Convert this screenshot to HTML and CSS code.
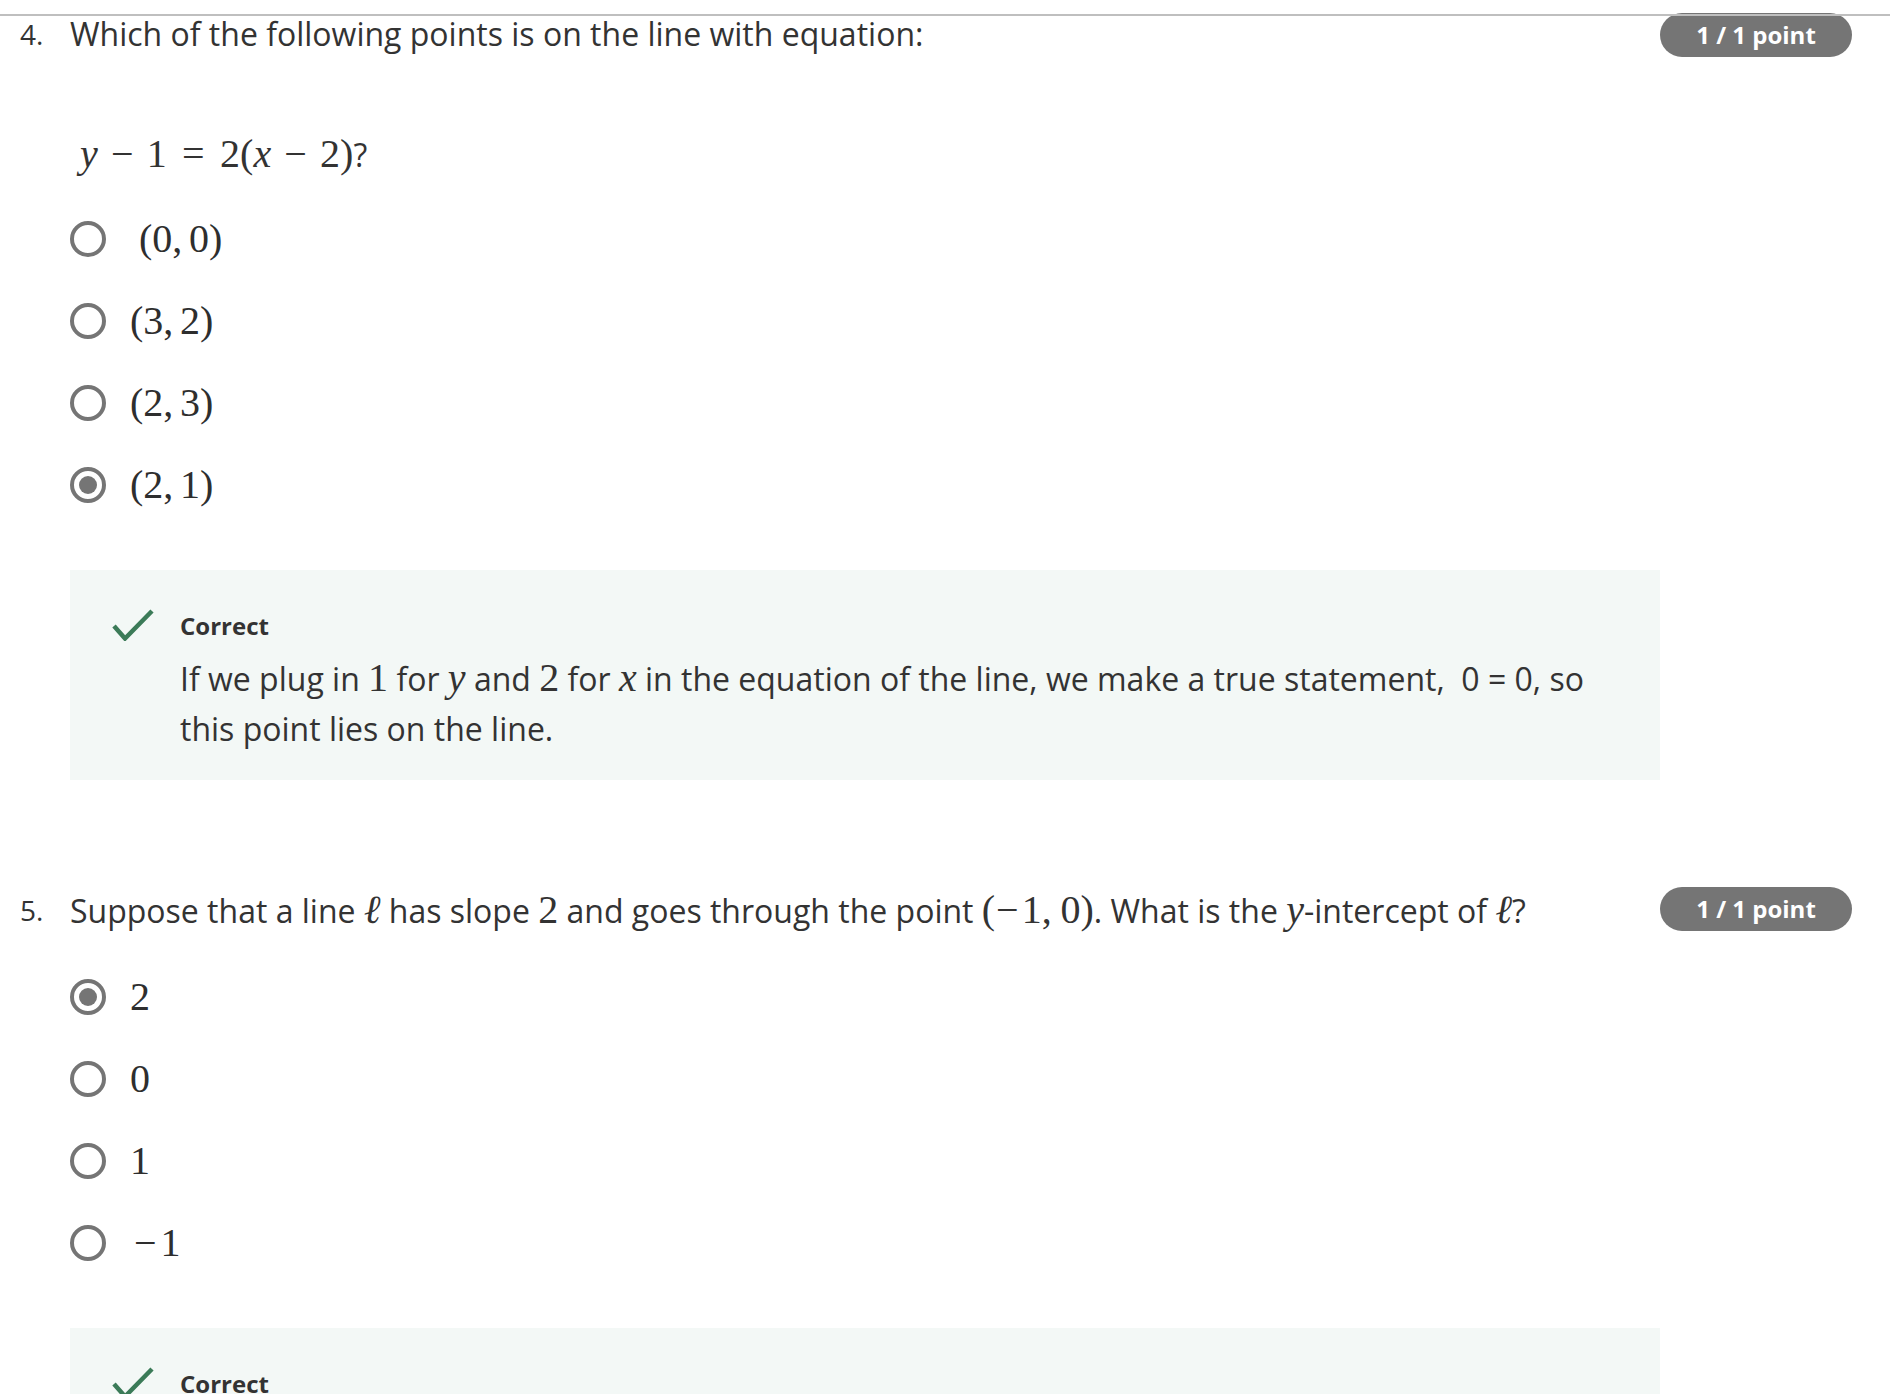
FILE: index.html
```html
<!DOCTYPE html>
<html lang="en">
<head>
<meta charset="utf-8">
<title>Quiz</title>
<link rel="stylesheet" href="styles.css">
</head>
<body>
<div class="page">
  <section class="question q4">
    <div class="qnum">4.</div>
    <div class="qbody">
      <div class="qtext">Which of the following points is on the line with equation:</div>
      <p class="eq"><span class="m"><i>y</i><span class="bin">−</span>1<span class="rel">=</span>2(<i>x</i><span class="bin">−</span>2)</span>?</p>
      <ul class="options">
        <li class="opt"><span class="radio"></span><span class="m lead">(0,<span class="ts"></span>0)</span></li>
        <li class="opt"><span class="radio"></span><span class="m">(3,<span class="ts"></span>2)</span></li>
        <li class="opt"><span class="radio"></span><span class="m">(2,<span class="ts"></span>3)</span></li>
        <li class="opt"><span class="radio checked"></span><span class="m">(2,<span class="ts"></span>1)</span></li>
      </ul>
      <div class="feedback">
        <svg class="check" viewBox="0 0 42 32" aria-hidden="true"><polyline points="2,17 13,29.5 40,2" fill="none" stroke="#3b7b58" stroke-width="4.5" stroke-linecap="butt" stroke-linejoin="miter"/></svg>
        <div class="fb-body">
          <div class="fb-title">Correct</div>
          <p class="fb-text">If we plug in <span class="m">1</span> for <span class="m"><i>y</i></span> and <span class="m">2</span> for <span class="m"><i>x</i></span> in the equation of the line, we make a true statement,&nbsp; 0 = 0, so this point lies on the line.</p>
        </div>
      </div>
    </div>
    <div class="badge">1 / 1 point</div>
  </section>

  <section class="question q5">
    <div class="qnum">5.</div>
    <div class="qbody">
      <div class="qtext">Suppose that a line <span class="m"><i>ℓ</i></span> has slope <span class="m">2</span> and goes through the point <span class="m">(<span class="un">−</span>1,<span class="ts"></span>0)</span>. What is the <span class="m"><i>y</i></span>-intercept of <span class="m"><i>ℓ</i></span>?</div>
      <ul class="options">
        <li class="opt"><span class="radio checked"></span><span class="m">2</span></li>
        <li class="opt"><span class="radio"></span><span class="m">0</span></li>
        <li class="opt"><span class="radio"></span><span class="m">1</span></li>
        <li class="opt"><span class="radio"></span><span class="m"><span class="un">−</span>1</span></li>
      </ul>
      <div class="feedback">
        <svg class="check" viewBox="0 0 42 32" aria-hidden="true"><polyline points="2,17 13,29.5 40,2" fill="none" stroke="#3b7b58" stroke-width="4.5" stroke-linecap="butt" stroke-linejoin="miter"/></svg>
        <div class="fb-body">
          <div class="fb-title">Correct</div>
          <p class="fb-text">The line is <span class="m"><i>y</i><span class="rel">=</span>2<i>x</i><span class="bin">+</span>2</span>, so it crosses the <span class="m"><i>y</i></span>-axis at <span class="m">2</span>.</p>
        </div>
      </div>
    </div>
    <div class="badge">1 / 1 point</div>
  </section>
</div>
</body>
</html>
```

FILE: styles.css
```css
* {
  box-sizing: border-box;
}

html,
body {
  margin: 0;
  padding: 0;
  background: #ffffff;
}

body {
  font-family: "Open Sans", "Liberation Sans", sans-serif;
  color: #333333;
}

.page {
  position: relative;
  padding-top: 16px;
}

.page::before {
  content: "";
  position: absolute;
  top: 14px;
  left: 0;
  right: 0;
  height: 2px;
  background: #bfbfbf;
  z-index: 2;
}

.question {
  display: grid;
  grid-template-columns: 50px 1590px 192px;
  padding-left: 20px;
  align-items: start;
}

.question + .question {
  margin-top: 110px;
}

.qnum {
  font-size: 28px;
  line-height: 40px;
}

.qtext {
  font-size: 32px;
  line-height: 40px;
}

.q4 .qtext,
.q4 .qnum {
  margin-top: -2px;
}

.badge {
  height: 44px;
  margin-top: -3px;
  border-radius: 22px;
  background: #757575;
  color: #ffffff;
  font-weight: 700;
  font-size: 24px;
  line-height: 44px;
  text-align: center;
}

.eq {
  margin: 76px 0 0 10px;
  font-size: 32px;
  line-height: 50px;
}

.m {
  font-family: "Liberation Serif", "DejaVu Serif", serif;
  font-size: 1.25em;
  line-height: 1;
}

.options {
  list-style: none;
  margin: 18px 0 0;
  padding: 0;
}

.q5 .options {
  margin-top: 25px;
}

.opt {
  height: 82px;
  display: flex;
  align-items: center;
  gap: 24px;
}

.radio {
  flex: none;
  width: 36px;
  height: 36px;
  border: 4px solid #757575;
  border-radius: 50%;
  display: flex;
  align-items: center;
  justify-content: center;
}

.radio.checked::after {
  content: "";
  width: 18px;
  height: 18px;
  border-radius: 50%;
  background: #757575;
}

.opt .m {
  font-size: 40px;
  color: #2e2e2e;
}

.m i {
  font-style: italic;
}

.lead {
  padding-left: 9px;
}

.bin {
  padding: 0 0.33em;
}

.rel {
  padding: 0 0.385em;
}

.un {
  padding: 0 0.1em;
}

.qtext .un {
  padding: 0 0.08em 0 0.02em;
}

.ts {
  display: inline-block;
  width: 0.1667em;
}

.qtext .ts {
  width: 0.22em;
}

.feedback {
  margin-top: 44px;
  background: #f3f8f6;
  display: flex;
  gap: 26px;
  padding: 38px 42px 26px;
}

.check {
  flex: none;
  width: 42px;
  height: 32px;
  margin-top: 1px;
}

.fb-title {
  font-weight: 700;
  font-size: 24px;
  line-height: 36px;
}

.fb-text {
  margin: 10px 0 0;
  font-size: 32px;
  line-height: 50px;
}
```
